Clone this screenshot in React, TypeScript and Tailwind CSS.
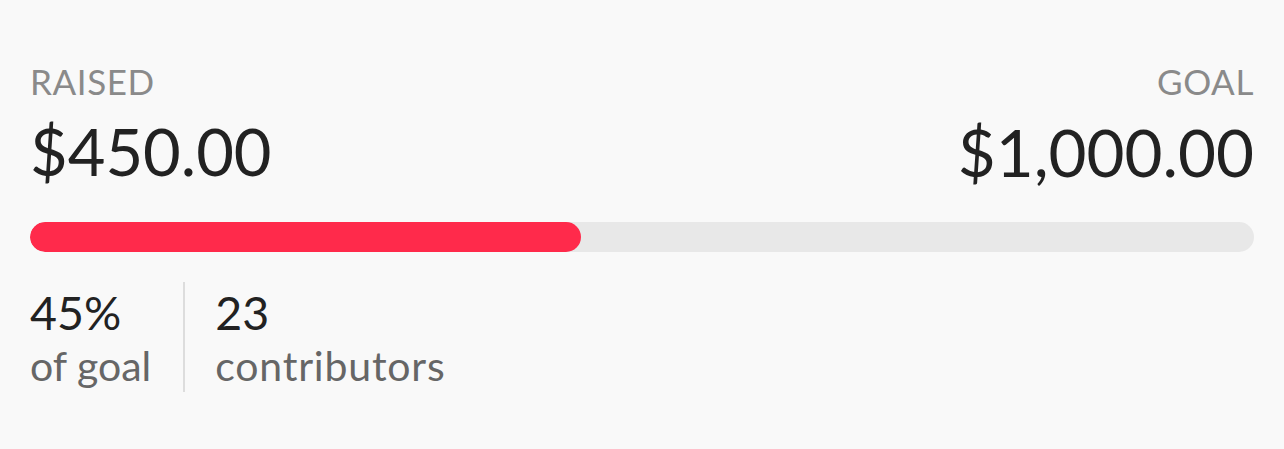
export default function App() {
  const raised = 450;
  const goal = 1000;
  const pct = Math.round((raised / goal) * 100);

  return (
    <div className="min-h-[449px] w-full bg-[#f9f9f9] px-[30px] pt-[60px] font-['Lato',sans-serif]">
      <div className="flex items-start justify-between">
        <div>
          <div className="text-[35px] leading-[42px] tracking-[0.6px] text-[#8a8a8a]">RAISED</div>
          <div className="mt-[11px] text-[65px] leading-[77px] text-[#222222]">$450.00</div>
        </div>
        <div className="text-right">
          <div className="text-[35px] leading-[42px] tracking-[0.6px] text-[#8a8a8a]">GOAL</div>
          <div className="mt-[11px] text-[65.5px] leading-[77px] text-[#222222]">$1,000.00</div>
        </div>
      </div>

      <div className="mt-[32px] h-[30px] w-full overflow-hidden rounded-full bg-[#e8e8e8]">
        <div className="h-full rounded-full bg-[#ff2a4b]" style={{ width: `${pct}%` }} />
      </div>

      <div className="mt-[30px] flex items-stretch">
        <div className="pr-[32px] pb-[3px]">
          <div className="text-[46.5px] leading-[60px] text-[#222222]">{pct}%</div>
          <div className="text-[41px] leading-[47px] text-[#666666]">of goal</div>
        </div>
        <div className="w-[2px] bg-[#dddddd]" />
        <div className="pl-[30px] pb-[3px]">
          <div className="text-[46.5px] leading-[60px] text-[#222222]">23</div>
          <div className="text-[41px] leading-[47px] tracking-[0.8px] text-[#666666]">contributors</div>
        </div>
      </div>
    </div>
  );
}
